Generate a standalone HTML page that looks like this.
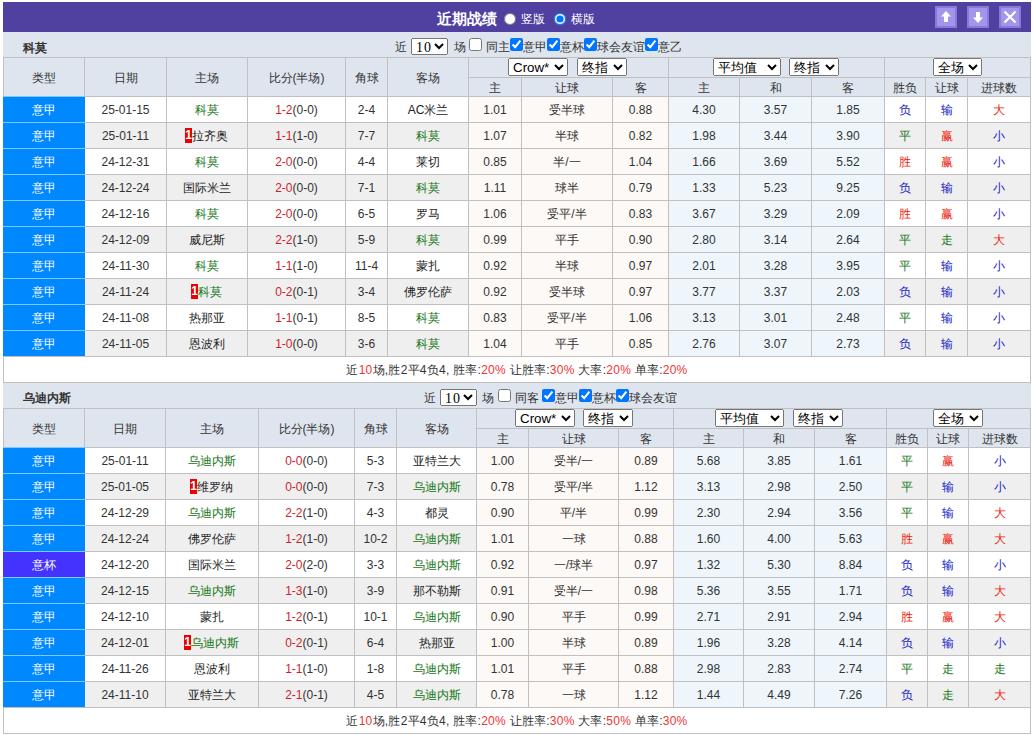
<!DOCTYPE html><html><head><meta charset="utf-8"><style>
*{margin:0;padding:0;box-sizing:border-box}
html,body{width:1033px;height:735px;overflow:hidden;background:#fff}
body{position:relative;font-family:"Liberation Sans",sans-serif;font-size:12px;color:#333}
.a{position:absolute}
.c{position:absolute;text-align:center;white-space:nowrap;overflow:hidden}
.t{position:absolute;white-space:nowrap;line-height:16px;color:#333}
.team{position:absolute;font-weight:bold;color:#333;white-space:nowrap}
.title{position:absolute;font-weight:bold;color:#fff;font-size:15px;white-space:nowrap}
.radio{position:absolute;width:12px;height:12px;margin:0}
.btn{position:absolute;width:22px;height:22px;background:#a494ec;border:2px solid #8a7ad8}
.sel{position:absolute;font-family:"Liberation Sans",sans-serif;font-size:13.33px;margin:0}
.s10{font-family:"Liberation Serif",serif;font-size:14px;letter-spacing:1px}
.cb{position:absolute;width:13px;height:13px;margin:0}
.rc{display:inline-block;background:#e00;color:#fff;font-weight:bold;width:7px;height:15px;line-height:15px;font-size:12px;vertical-align:middle;text-align:center;overflow:hidden;margin-top:-3px;margin-left:-1px}
.r{color:#e33}
</style></head><body><div class="a" style="left:3px;top:2px;width:1028px;height:30px;background:#5040a0;"></div><div class="a" style="left:3px;top:32px;width:1028px;height:1px;background:#dcdcf6;"></div><div class="title" style="left:437px;top:4px;height:30px;line-height:30px">近期战绩</div><input type="radio" name="v" class="radio" style="left:504px;top:13px"><div class="t" style="left:521px;top:11px;color:#fff">竖版</div><input type="radio" name="v" class="radio" checked style="left:554px;top:13px"><div class="t" style="left:571px;top:11px;color:#fff">横版</div><div class="btn" style="left:935px;top:6px"></div><div class="btn" style="left:967px;top:6px"></div><div class="btn" style="left:999px;top:6px"></div><svg class="a" style="left:935px;top:6px" width="22" height="22" viewBox="0 0 22 22"><path d="M11 5 L16 10.5 L13 10.5 L13 16 L9 16 L9 10.5 L6 10.5 Z" fill="#fff"/></svg><svg class="a" style="left:967px;top:6px" width="22" height="22" viewBox="0 0 22 22"><path d="M11 17 L16 11.5 L13 11.5 L13 6 L9 6 L9 11.5 L6 11.5 Z" fill="#fff"/></svg><svg class="a" style="left:999px;top:6px" width="22" height="22" viewBox="0 0 22 22"><path d="M5.5 5.5 L16.5 16.5 M16.5 5.5 L5.5 16.5" stroke="#fff" stroke-width="2.2"/></svg><div class="a" style="left:3px;top:32px;width:1028px;height:25px;background:#dfe5ee;"></div><div class="team" style="left:23px;top:36px;height:25px;line-height:25px">科莫</div><div class="t" style="left:395px;top:39px;">近</div><select class="sel s10" style="left:411px;top:38px;width:37px;height:17px;"><option>10</option></select><div class="t" style="left:454px;top:39px;">场</div><input type="checkbox" class="cb" style="left:469px;top:38px"><div class="t" style="left:486px;top:39px;">同主</div><input type="checkbox" class="cb" style="left:510px;top:38px" checked><div class="t" style="left:523px;top:39px;">意甲</div><input type="checkbox" class="cb" style="left:547px;top:38px" checked><div class="t" style="left:560px;top:39px;">意杯</div><input type="checkbox" class="cb" style="left:584px;top:38px" checked><div class="t" style="left:597px;top:39px;">球会友谊</div><input type="checkbox" class="cb" style="left:645px;top:38px" checked><div class="t" style="left:658px;top:39px;">意乙</div><div class="a" style="left:3px;top:57px;width:1028px;height:326px;background:#c0c0c0;"></div><div class="c" style="left:4px;top:58px;width:80px;height:38px;line-height:40px;background:#dfe5ee;color:#333;">类型</div><div class="c" style="left:85px;top:58px;width:81px;height:38px;line-height:40px;background:#dfe5ee;color:#333;">日期</div><div class="c" style="left:167px;top:58px;width:80px;height:38px;line-height:40px;background:#dfe5ee;color:#333;">主场</div><div class="c" style="left:248px;top:58px;width:97px;height:38px;line-height:40px;background:#dfe5ee;color:#333;">比分(半场)</div><div class="c" style="left:346px;top:58px;width:41px;height:38px;line-height:40px;background:#dfe5ee;color:#333;">角球</div><div class="c" style="left:388px;top:58px;width:80px;height:38px;line-height:40px;background:#dfe5ee;color:#333;">客场</div><div class="c" style="left:469px;top:58px;width:199px;height:19px;line-height:21px;background:#dfe5ee;"></div><div class="c" style="left:669px;top:58px;width:215px;height:19px;line-height:21px;background:#dfe5ee;"></div><div class="c" style="left:885px;top:58px;width:145px;height:19px;line-height:21px;background:#dfe5ee;"></div><div class="c" style="left:469px;top:78px;width:52px;height:18px;line-height:20px;background:#dfe5ee;color:#333;">主</div><div class="c" style="left:522px;top:78px;width:90px;height:18px;line-height:20px;background:#dfe5ee;color:#333;">让球</div><div class="c" style="left:613px;top:78px;width:55px;height:18px;line-height:20px;background:#dfe5ee;color:#333;">客</div><div class="c" style="left:669px;top:78px;width:70px;height:18px;line-height:20px;background:#dfe5ee;color:#333;">主</div><div class="c" style="left:740px;top:78px;width:71px;height:18px;line-height:20px;background:#dfe5ee;color:#333;">和</div><div class="c" style="left:812px;top:78px;width:72px;height:18px;line-height:20px;background:#dfe5ee;color:#333;">客</div><div class="c" style="left:885px;top:78px;width:40px;height:18px;line-height:20px;background:#dfe5ee;color:#333;">胜负</div><div class="c" style="left:926px;top:78px;width:41px;height:18px;line-height:20px;background:#dfe5ee;color:#333;">让球</div><div class="c" style="left:968px;top:78px;width:62px;height:18px;line-height:20px;background:#dfe5ee;color:#333;">进球数</div><div class="a" style="left:3px;top:96px;width:82px;height:27px;background:#0088ff;"></div><div class="a" style="left:3px;top:96px;width:82px;height:1px;background:#7ccaff;"></div><div class="a" style="left:3px;top:122px;width:82px;height:1px;background:#7ccaff;"></div><div class="c" style="left:3px;top:97px;width:82px;height:25px;line-height:27px;color:#fff">意甲</div><div class="c" style="left:85px;top:97px;width:81px;height:25px;line-height:27px;background:#fff;color:#333;">25-01-15</div><div class="c" style="left:167px;top:97px;width:80px;height:25px;line-height:27px;background:#fff;color:#157515;">科莫</div><div class="c" style="left:248px;top:97px;width:97px;height:25px;line-height:27px;background:#fff;color:#333;"><span style="color:#cc1f2e">1-2</span>(0-0)</div><div class="c" style="left:346px;top:97px;width:41px;height:25px;line-height:27px;background:#fff;color:#333;">2-4</div><div class="c" style="left:388px;top:97px;width:80px;height:25px;line-height:27px;background:#fff;color:#222;">AC米兰</div><div class="c" style="left:469px;top:97px;width:52px;height:25px;line-height:27px;background:#fdf9f6;color:#333;">1.01</div><div class="c" style="left:522px;top:97px;width:90px;height:25px;line-height:27px;background:#fdf9f6;color:#333;">受半球</div><div class="c" style="left:613px;top:97px;width:55px;height:25px;line-height:27px;background:#fdf9f6;color:#333;">0.88</div><div class="c" style="left:669px;top:97px;width:70px;height:25px;line-height:27px;background:#eef6fb;color:#333;">4.30</div><div class="c" style="left:740px;top:97px;width:71px;height:25px;line-height:27px;background:#eef6fb;color:#333;">3.57</div><div class="c" style="left:812px;top:97px;width:72px;height:25px;line-height:27px;background:#eef6fb;color:#333;">1.85</div><div class="c" style="left:885px;top:97px;width:40px;height:25px;line-height:27px;background:#fff;color:#2020c8;">负</div><div class="c" style="left:926px;top:97px;width:41px;height:25px;line-height:27px;background:#fff;color:#2020c8;">输</div><div class="c" style="left:968px;top:97px;width:62px;height:25px;line-height:27px;background:#fff;color:#ee1a0a;">大</div><div class="a" style="left:3px;top:122px;width:82px;height:27px;background:#0088ff;"></div><div class="a" style="left:3px;top:122px;width:82px;height:1px;background:#7ccaff;"></div><div class="a" style="left:3px;top:148px;width:82px;height:1px;background:#7ccaff;"></div><div class="c" style="left:3px;top:123px;width:82px;height:25px;line-height:27px;color:#fff">意甲</div><div class="c" style="left:85px;top:123px;width:81px;height:25px;line-height:27px;background:#efefef;color:#333;">25-01-11</div><div class="c" style="left:167px;top:123px;width:80px;height:25px;line-height:27px;background:#efefef;color:#222;"><span class="rc">1</span>拉齐奥</div><div class="c" style="left:248px;top:123px;width:97px;height:25px;line-height:27px;background:#efefef;color:#333;"><span style="color:#cc1f2e">1-1</span>(1-0)</div><div class="c" style="left:346px;top:123px;width:41px;height:25px;line-height:27px;background:#efefef;color:#333;">7-7</div><div class="c" style="left:388px;top:123px;width:80px;height:25px;line-height:27px;background:#efefef;color:#157515;">科莫</div><div class="c" style="left:469px;top:123px;width:52px;height:25px;line-height:27px;background:#fdf9f6;color:#333;">1.07</div><div class="c" style="left:522px;top:123px;width:90px;height:25px;line-height:27px;background:#fdf9f6;color:#333;">半球</div><div class="c" style="left:613px;top:123px;width:55px;height:25px;line-height:27px;background:#fdf9f6;color:#333;">0.82</div><div class="c" style="left:669px;top:123px;width:70px;height:25px;line-height:27px;background:#eef6fb;color:#333;">1.98</div><div class="c" style="left:740px;top:123px;width:71px;height:25px;line-height:27px;background:#eef6fb;color:#333;">3.44</div><div class="c" style="left:812px;top:123px;width:72px;height:25px;line-height:27px;background:#eef6fb;color:#333;">3.90</div><div class="c" style="left:885px;top:123px;width:40px;height:25px;line-height:27px;background:#efefef;color:#157515;">平</div><div class="c" style="left:926px;top:123px;width:41px;height:25px;line-height:27px;background:#efefef;color:#ee1a0a;">赢</div><div class="c" style="left:968px;top:123px;width:62px;height:25px;line-height:27px;background:#efefef;color:#2020c8;">小</div><div class="a" style="left:3px;top:148px;width:82px;height:27px;background:#0088ff;"></div><div class="a" style="left:3px;top:148px;width:82px;height:1px;background:#7ccaff;"></div><div class="a" style="left:3px;top:174px;width:82px;height:1px;background:#7ccaff;"></div><div class="c" style="left:3px;top:149px;width:82px;height:25px;line-height:27px;color:#fff">意甲</div><div class="c" style="left:85px;top:149px;width:81px;height:25px;line-height:27px;background:#fff;color:#333;">24-12-31</div><div class="c" style="left:167px;top:149px;width:80px;height:25px;line-height:27px;background:#fff;color:#157515;">科莫</div><div class="c" style="left:248px;top:149px;width:97px;height:25px;line-height:27px;background:#fff;color:#333;"><span style="color:#cc1f2e">2-0</span>(0-0)</div><div class="c" style="left:346px;top:149px;width:41px;height:25px;line-height:27px;background:#fff;color:#333;">4-4</div><div class="c" style="left:388px;top:149px;width:80px;height:25px;line-height:27px;background:#fff;color:#222;">莱切</div><div class="c" style="left:469px;top:149px;width:52px;height:25px;line-height:27px;background:#fdf9f6;color:#333;">0.85</div><div class="c" style="left:522px;top:149px;width:90px;height:25px;line-height:27px;background:#fdf9f6;color:#333;">半/一</div><div class="c" style="left:613px;top:149px;width:55px;height:25px;line-height:27px;background:#fdf9f6;color:#333;">1.04</div><div class="c" style="left:669px;top:149px;width:70px;height:25px;line-height:27px;background:#eef6fb;color:#333;">1.66</div><div class="c" style="left:740px;top:149px;width:71px;height:25px;line-height:27px;background:#eef6fb;color:#333;">3.69</div><div class="c" style="left:812px;top:149px;width:72px;height:25px;line-height:27px;background:#eef6fb;color:#333;">5.52</div><div class="c" style="left:885px;top:149px;width:40px;height:25px;line-height:27px;background:#fff;color:#ee1a0a;">胜</div><div class="c" style="left:926px;top:149px;width:41px;height:25px;line-height:27px;background:#fff;color:#ee1a0a;">赢</div><div class="c" style="left:968px;top:149px;width:62px;height:25px;line-height:27px;background:#fff;color:#2020c8;">小</div><div class="a" style="left:3px;top:174px;width:82px;height:27px;background:#0088ff;"></div><div class="a" style="left:3px;top:174px;width:82px;height:1px;background:#7ccaff;"></div><div class="a" style="left:3px;top:200px;width:82px;height:1px;background:#7ccaff;"></div><div class="c" style="left:3px;top:175px;width:82px;height:25px;line-height:27px;color:#fff">意甲</div><div class="c" style="left:85px;top:175px;width:81px;height:25px;line-height:27px;background:#efefef;color:#333;">24-12-24</div><div class="c" style="left:167px;top:175px;width:80px;height:25px;line-height:27px;background:#efefef;color:#222;">国际米兰</div><div class="c" style="left:248px;top:175px;width:97px;height:25px;line-height:27px;background:#efefef;color:#333;"><span style="color:#cc1f2e">2-0</span>(0-0)</div><div class="c" style="left:346px;top:175px;width:41px;height:25px;line-height:27px;background:#efefef;color:#333;">7-1</div><div class="c" style="left:388px;top:175px;width:80px;height:25px;line-height:27px;background:#efefef;color:#157515;">科莫</div><div class="c" style="left:469px;top:175px;width:52px;height:25px;line-height:27px;background:#fdf9f6;color:#333;">1.11</div><div class="c" style="left:522px;top:175px;width:90px;height:25px;line-height:27px;background:#fdf9f6;color:#333;">球半</div><div class="c" style="left:613px;top:175px;width:55px;height:25px;line-height:27px;background:#fdf9f6;color:#333;">0.79</div><div class="c" style="left:669px;top:175px;width:70px;height:25px;line-height:27px;background:#eef6fb;color:#333;">1.33</div><div class="c" style="left:740px;top:175px;width:71px;height:25px;line-height:27px;background:#eef6fb;color:#333;">5.23</div><div class="c" style="left:812px;top:175px;width:72px;height:25px;line-height:27px;background:#eef6fb;color:#333;">9.25</div><div class="c" style="left:885px;top:175px;width:40px;height:25px;line-height:27px;background:#efefef;color:#2020c8;">负</div><div class="c" style="left:926px;top:175px;width:41px;height:25px;line-height:27px;background:#efefef;color:#2020c8;">输</div><div class="c" style="left:968px;top:175px;width:62px;height:25px;line-height:27px;background:#efefef;color:#2020c8;">小</div><div class="a" style="left:3px;top:200px;width:82px;height:27px;background:#0088ff;"></div><div class="a" style="left:3px;top:200px;width:82px;height:1px;background:#7ccaff;"></div><div class="a" style="left:3px;top:226px;width:82px;height:1px;background:#7ccaff;"></div><div class="c" style="left:3px;top:201px;width:82px;height:25px;line-height:27px;color:#fff">意甲</div><div class="c" style="left:85px;top:201px;width:81px;height:25px;line-height:27px;background:#fff;color:#333;">24-12-16</div><div class="c" style="left:167px;top:201px;width:80px;height:25px;line-height:27px;background:#fff;color:#157515;">科莫</div><div class="c" style="left:248px;top:201px;width:97px;height:25px;line-height:27px;background:#fff;color:#333;"><span style="color:#cc1f2e">2-0</span>(0-0)</div><div class="c" style="left:346px;top:201px;width:41px;height:25px;line-height:27px;background:#fff;color:#333;">6-5</div><div class="c" style="left:388px;top:201px;width:80px;height:25px;line-height:27px;background:#fff;color:#222;">罗马</div><div class="c" style="left:469px;top:201px;width:52px;height:25px;line-height:27px;background:#fdf9f6;color:#333;">1.06</div><div class="c" style="left:522px;top:201px;width:90px;height:25px;line-height:27px;background:#fdf9f6;color:#333;">受平/半</div><div class="c" style="left:613px;top:201px;width:55px;height:25px;line-height:27px;background:#fdf9f6;color:#333;">0.83</div><div class="c" style="left:669px;top:201px;width:70px;height:25px;line-height:27px;background:#eef6fb;color:#333;">3.67</div><div class="c" style="left:740px;top:201px;width:71px;height:25px;line-height:27px;background:#eef6fb;color:#333;">3.29</div><div class="c" style="left:812px;top:201px;width:72px;height:25px;line-height:27px;background:#eef6fb;color:#333;">2.09</div><div class="c" style="left:885px;top:201px;width:40px;height:25px;line-height:27px;background:#fff;color:#ee1a0a;">胜</div><div class="c" style="left:926px;top:201px;width:41px;height:25px;line-height:27px;background:#fff;color:#ee1a0a;">赢</div><div class="c" style="left:968px;top:201px;width:62px;height:25px;line-height:27px;background:#fff;color:#2020c8;">小</div><div class="a" style="left:3px;top:226px;width:82px;height:27px;background:#0088ff;"></div><div class="a" style="left:3px;top:226px;width:82px;height:1px;background:#7ccaff;"></div><div class="a" style="left:3px;top:252px;width:82px;height:1px;background:#7ccaff;"></div><div class="c" style="left:3px;top:227px;width:82px;height:25px;line-height:27px;color:#fff">意甲</div><div class="c" style="left:85px;top:227px;width:81px;height:25px;line-height:27px;background:#efefef;color:#333;">24-12-09</div><div class="c" style="left:167px;top:227px;width:80px;height:25px;line-height:27px;background:#efefef;color:#222;">威尼斯</div><div class="c" style="left:248px;top:227px;width:97px;height:25px;line-height:27px;background:#efefef;color:#333;"><span style="color:#cc1f2e">2-2</span>(1-0)</div><div class="c" style="left:346px;top:227px;width:41px;height:25px;line-height:27px;background:#efefef;color:#333;">5-9</div><div class="c" style="left:388px;top:227px;width:80px;height:25px;line-height:27px;background:#efefef;color:#157515;">科莫</div><div class="c" style="left:469px;top:227px;width:52px;height:25px;line-height:27px;background:#fdf9f6;color:#333;">0.99</div><div class="c" style="left:522px;top:227px;width:90px;height:25px;line-height:27px;background:#fdf9f6;color:#333;">平手</div><div class="c" style="left:613px;top:227px;width:55px;height:25px;line-height:27px;background:#fdf9f6;color:#333;">0.90</div><div class="c" style="left:669px;top:227px;width:70px;height:25px;line-height:27px;background:#eef6fb;color:#333;">2.80</div><div class="c" style="left:740px;top:227px;width:71px;height:25px;line-height:27px;background:#eef6fb;color:#333;">3.14</div><div class="c" style="left:812px;top:227px;width:72px;height:25px;line-height:27px;background:#eef6fb;color:#333;">2.64</div><div class="c" style="left:885px;top:227px;width:40px;height:25px;line-height:27px;background:#efefef;color:#157515;">平</div><div class="c" style="left:926px;top:227px;width:41px;height:25px;line-height:27px;background:#efefef;color:#157515;">走</div><div class="c" style="left:968px;top:227px;width:62px;height:25px;line-height:27px;background:#efefef;color:#ee1a0a;">大</div><div class="a" style="left:3px;top:252px;width:82px;height:27px;background:#0088ff;"></div><div class="a" style="left:3px;top:252px;width:82px;height:1px;background:#7ccaff;"></div><div class="a" style="left:3px;top:278px;width:82px;height:1px;background:#7ccaff;"></div><div class="c" style="left:3px;top:253px;width:82px;height:25px;line-height:27px;color:#fff">意甲</div><div class="c" style="left:85px;top:253px;width:81px;height:25px;line-height:27px;background:#fff;color:#333;">24-11-30</div><div class="c" style="left:167px;top:253px;width:80px;height:25px;line-height:27px;background:#fff;color:#157515;">科莫</div><div class="c" style="left:248px;top:253px;width:97px;height:25px;line-height:27px;background:#fff;color:#333;"><span style="color:#cc1f2e">1-1</span>(1-0)</div><div class="c" style="left:346px;top:253px;width:41px;height:25px;line-height:27px;background:#fff;color:#333;">11-4</div><div class="c" style="left:388px;top:253px;width:80px;height:25px;line-height:27px;background:#fff;color:#222;">蒙扎</div><div class="c" style="left:469px;top:253px;width:52px;height:25px;line-height:27px;background:#fdf9f6;color:#333;">0.92</div><div class="c" style="left:522px;top:253px;width:90px;height:25px;line-height:27px;background:#fdf9f6;color:#333;">半球</div><div class="c" style="left:613px;top:253px;width:55px;height:25px;line-height:27px;background:#fdf9f6;color:#333;">0.97</div><div class="c" style="left:669px;top:253px;width:70px;height:25px;line-height:27px;background:#eef6fb;color:#333;">2.01</div><div class="c" style="left:740px;top:253px;width:71px;height:25px;line-height:27px;background:#eef6fb;color:#333;">3.28</div><div class="c" style="left:812px;top:253px;width:72px;height:25px;line-height:27px;background:#eef6fb;color:#333;">3.95</div><div class="c" style="left:885px;top:253px;width:40px;height:25px;line-height:27px;background:#fff;color:#157515;">平</div><div class="c" style="left:926px;top:253px;width:41px;height:25px;line-height:27px;background:#fff;color:#2020c8;">输</div><div class="c" style="left:968px;top:253px;width:62px;height:25px;line-height:27px;background:#fff;color:#2020c8;">小</div><div class="a" style="left:3px;top:278px;width:82px;height:27px;background:#0088ff;"></div><div class="a" style="left:3px;top:278px;width:82px;height:1px;background:#7ccaff;"></div><div class="a" style="left:3px;top:304px;width:82px;height:1px;background:#7ccaff;"></div><div class="c" style="left:3px;top:279px;width:82px;height:25px;line-height:27px;color:#fff">意甲</div><div class="c" style="left:85px;top:279px;width:81px;height:25px;line-height:27px;background:#efefef;color:#333;">24-11-24</div><div class="c" style="left:167px;top:279px;width:80px;height:25px;line-height:27px;background:#efefef;color:#157515;"><span class="rc">1</span>科莫</div><div class="c" style="left:248px;top:279px;width:97px;height:25px;line-height:27px;background:#efefef;color:#333;"><span style="color:#cc1f2e">0-2</span>(0-1)</div><div class="c" style="left:346px;top:279px;width:41px;height:25px;line-height:27px;background:#efefef;color:#333;">3-4</div><div class="c" style="left:388px;top:279px;width:80px;height:25px;line-height:27px;background:#efefef;color:#222;">佛罗伦萨</div><div class="c" style="left:469px;top:279px;width:52px;height:25px;line-height:27px;background:#fdf9f6;color:#333;">0.92</div><div class="c" style="left:522px;top:279px;width:90px;height:25px;line-height:27px;background:#fdf9f6;color:#333;">受半球</div><div class="c" style="left:613px;top:279px;width:55px;height:25px;line-height:27px;background:#fdf9f6;color:#333;">0.97</div><div class="c" style="left:669px;top:279px;width:70px;height:25px;line-height:27px;background:#eef6fb;color:#333;">3.77</div><div class="c" style="left:740px;top:279px;width:71px;height:25px;line-height:27px;background:#eef6fb;color:#333;">3.37</div><div class="c" style="left:812px;top:279px;width:72px;height:25px;line-height:27px;background:#eef6fb;color:#333;">2.03</div><div class="c" style="left:885px;top:279px;width:40px;height:25px;line-height:27px;background:#efefef;color:#2020c8;">负</div><div class="c" style="left:926px;top:279px;width:41px;height:25px;line-height:27px;background:#efefef;color:#2020c8;">输</div><div class="c" style="left:968px;top:279px;width:62px;height:25px;line-height:27px;background:#efefef;color:#2020c8;">小</div><div class="a" style="left:3px;top:304px;width:82px;height:27px;background:#0088ff;"></div><div class="a" style="left:3px;top:304px;width:82px;height:1px;background:#7ccaff;"></div><div class="a" style="left:3px;top:330px;width:82px;height:1px;background:#7ccaff;"></div><div class="c" style="left:3px;top:305px;width:82px;height:25px;line-height:27px;color:#fff">意甲</div><div class="c" style="left:85px;top:305px;width:81px;height:25px;line-height:27px;background:#fff;color:#333;">24-11-08</div><div class="c" style="left:167px;top:305px;width:80px;height:25px;line-height:27px;background:#fff;color:#222;">热那亚</div><div class="c" style="left:248px;top:305px;width:97px;height:25px;line-height:27px;background:#fff;color:#333;"><span style="color:#cc1f2e">1-1</span>(0-1)</div><div class="c" style="left:346px;top:305px;width:41px;height:25px;line-height:27px;background:#fff;color:#333;">8-5</div><div class="c" style="left:388px;top:305px;width:80px;height:25px;line-height:27px;background:#fff;color:#157515;">科莫</div><div class="c" style="left:469px;top:305px;width:52px;height:25px;line-height:27px;background:#fdf9f6;color:#333;">0.83</div><div class="c" style="left:522px;top:305px;width:90px;height:25px;line-height:27px;background:#fdf9f6;color:#333;">受平/半</div><div class="c" style="left:613px;top:305px;width:55px;height:25px;line-height:27px;background:#fdf9f6;color:#333;">1.06</div><div class="c" style="left:669px;top:305px;width:70px;height:25px;line-height:27px;background:#eef6fb;color:#333;">3.13</div><div class="c" style="left:740px;top:305px;width:71px;height:25px;line-height:27px;background:#eef6fb;color:#333;">3.01</div><div class="c" style="left:812px;top:305px;width:72px;height:25px;line-height:27px;background:#eef6fb;color:#333;">2.48</div><div class="c" style="left:885px;top:305px;width:40px;height:25px;line-height:27px;background:#fff;color:#157515;">平</div><div class="c" style="left:926px;top:305px;width:41px;height:25px;line-height:27px;background:#fff;color:#2020c8;">输</div><div class="c" style="left:968px;top:305px;width:62px;height:25px;line-height:27px;background:#fff;color:#2020c8;">小</div><div class="a" style="left:3px;top:330px;width:82px;height:27px;background:#0088ff;"></div><div class="a" style="left:3px;top:330px;width:82px;height:1px;background:#7ccaff;"></div><div class="a" style="left:3px;top:356px;width:82px;height:1px;background:#c0c0c0;"></div><div class="c" style="left:3px;top:331px;width:82px;height:25px;line-height:27px;color:#fff">意甲</div><div class="c" style="left:85px;top:331px;width:81px;height:25px;line-height:27px;background:#efefef;color:#333;">24-11-05</div><div class="c" style="left:167px;top:331px;width:80px;height:25px;line-height:27px;background:#efefef;color:#222;">恩波利</div><div class="c" style="left:248px;top:331px;width:97px;height:25px;line-height:27px;background:#efefef;color:#333;"><span style="color:#cc1f2e">1-0</span>(0-0)</div><div class="c" style="left:346px;top:331px;width:41px;height:25px;line-height:27px;background:#efefef;color:#333;">3-6</div><div class="c" style="left:388px;top:331px;width:80px;height:25px;line-height:27px;background:#efefef;color:#157515;">科莫</div><div class="c" style="left:469px;top:331px;width:52px;height:25px;line-height:27px;background:#fdf9f6;color:#333;">1.04</div><div class="c" style="left:522px;top:331px;width:90px;height:25px;line-height:27px;background:#fdf9f6;color:#333;">平手</div><div class="c" style="left:613px;top:331px;width:55px;height:25px;line-height:27px;background:#fdf9f6;color:#333;">0.85</div><div class="c" style="left:669px;top:331px;width:70px;height:25px;line-height:27px;background:#eef6fb;color:#333;">2.76</div><div class="c" style="left:740px;top:331px;width:71px;height:25px;line-height:27px;background:#eef6fb;color:#333;">3.07</div><div class="c" style="left:812px;top:331px;width:72px;height:25px;line-height:27px;background:#eef6fb;color:#333;">2.73</div><div class="c" style="left:885px;top:331px;width:40px;height:25px;line-height:27px;background:#efefef;color:#2020c8;">负</div><div class="c" style="left:926px;top:331px;width:41px;height:25px;line-height:27px;background:#efefef;color:#2020c8;">输</div><div class="c" style="left:968px;top:331px;width:62px;height:25px;line-height:27px;background:#efefef;color:#2020c8;">小</div><div class="c" style="left:4px;top:357px;width:1026px;height:25px;line-height:27px;background:#fff;color:#333;;letter-spacing:0.25px">近<span class="r">10</span>场,胜2平4负4, 胜率:<span class="r">20%</span> 让胜率:<span class="r">30%</span> 大率:<span class="r">20%</span> 单率:<span class="r">20%</span></div><select class="sel" style="left:508px;top:58px;width:60px;height:18px;"><option>Crow*</option></select><select class="sel" style="left:577px;top:58px;width:50px;height:18px;"><option>终指</option></select><select class="sel" style="left:713px;top:58px;width:68px;height:18px;"><option>平均值</option></select><select class="sel" style="left:789px;top:58px;width:50px;height:18px;"><option>终指</option></select><select class="sel" style="left:933px;top:58px;width:49px;height:18px;"><option>全场</option></select><div class="a" style="left:3px;top:383px;width:1028px;height:25px;background:#dfe5ee;"></div><div class="team" style="left:23px;top:385px;height:26px;line-height:26px">乌迪内斯</div><div class="t" style="left:424px;top:390px;">近</div><select class="sel s10" style="left:440px;top:389px;width:37px;height:17px;"><option>10</option></select><div class="t" style="left:482px;top:390px;">场</div><input type="checkbox" class="cb" style="left:498px;top:389px"><div class="t" style="left:515px;top:390px;">同客</div><input type="checkbox" class="cb" style="left:542px;top:389px" checked><div class="t" style="left:555px;top:390px;">意甲</div><input type="checkbox" class="cb" style="left:579px;top:389px" checked><div class="t" style="left:592px;top:390px;">意杯</div><input type="checkbox" class="cb" style="left:616px;top:389px" checked><div class="t" style="left:629px;top:390px;">球会友谊</div><div class="a" style="left:3px;top:408px;width:1028px;height:326px;background:#c0c0c0;"></div><div class="c" style="left:4px;top:409px;width:80px;height:38px;line-height:40px;background:#dfe5ee;color:#333;">类型</div><div class="c" style="left:85px;top:409px;width:80px;height:38px;line-height:40px;background:#dfe5ee;color:#333;">日期</div><div class="c" style="left:166px;top:409px;width:92px;height:38px;line-height:40px;background:#dfe5ee;color:#333;">主场</div><div class="c" style="left:259px;top:409px;width:95px;height:38px;line-height:40px;background:#dfe5ee;color:#333;">比分(半场)</div><div class="c" style="left:355px;top:409px;width:41px;height:38px;line-height:40px;background:#dfe5ee;color:#333;">角球</div><div class="c" style="left:397px;top:409px;width:79px;height:38px;line-height:40px;background:#dfe5ee;color:#333;">客场</div><div class="c" style="left:477px;top:409px;width:196px;height:19px;line-height:21px;background:#dfe5ee;"></div><div class="c" style="left:674px;top:409px;width:212px;height:19px;line-height:21px;background:#dfe5ee;"></div><div class="c" style="left:887px;top:409px;width:143px;height:19px;line-height:21px;background:#dfe5ee;"></div><div class="c" style="left:477px;top:429px;width:51px;height:18px;line-height:20px;background:#dfe5ee;color:#333;">主</div><div class="c" style="left:529px;top:429px;width:89px;height:18px;line-height:20px;background:#dfe5ee;color:#333;">让球</div><div class="c" style="left:619px;top:429px;width:54px;height:18px;line-height:20px;background:#dfe5ee;color:#333;">客</div><div class="c" style="left:674px;top:429px;width:69px;height:18px;line-height:20px;background:#dfe5ee;color:#333;">主</div><div class="c" style="left:744px;top:429px;width:70px;height:18px;line-height:20px;background:#dfe5ee;color:#333;">和</div><div class="c" style="left:815px;top:429px;width:71px;height:18px;line-height:20px;background:#dfe5ee;color:#333;">客</div><div class="c" style="left:887px;top:429px;width:40px;height:18px;line-height:20px;background:#dfe5ee;color:#333;">胜负</div><div class="c" style="left:928px;top:429px;width:40px;height:18px;line-height:20px;background:#dfe5ee;color:#333;">让球</div><div class="c" style="left:969px;top:429px;width:61px;height:18px;line-height:20px;background:#dfe5ee;color:#333;">进球数</div><div class="a" style="left:3px;top:447px;width:82px;height:27px;background:#0088ff;"></div><div class="a" style="left:3px;top:447px;width:82px;height:1px;background:#7ccaff;"></div><div class="a" style="left:3px;top:473px;width:82px;height:1px;background:#7ccaff;"></div><div class="c" style="left:3px;top:448px;width:82px;height:25px;line-height:27px;color:#fff">意甲</div><div class="c" style="left:85px;top:448px;width:80px;height:25px;line-height:27px;background:#fff;color:#333;">25-01-11</div><div class="c" style="left:166px;top:448px;width:92px;height:25px;line-height:27px;background:#fff;color:#157515;">乌迪内斯</div><div class="c" style="left:259px;top:448px;width:95px;height:25px;line-height:27px;background:#fff;color:#333;"><span style="color:#cc1f2e">0-0</span>(0-0)</div><div class="c" style="left:355px;top:448px;width:41px;height:25px;line-height:27px;background:#fff;color:#333;">5-3</div><div class="c" style="left:397px;top:448px;width:79px;height:25px;line-height:27px;background:#fff;color:#222;">亚特兰大</div><div class="c" style="left:477px;top:448px;width:51px;height:25px;line-height:27px;background:#fdf9f6;color:#333;">1.00</div><div class="c" style="left:529px;top:448px;width:89px;height:25px;line-height:27px;background:#fdf9f6;color:#333;">受半/一</div><div class="c" style="left:619px;top:448px;width:54px;height:25px;line-height:27px;background:#fdf9f6;color:#333;">0.89</div><div class="c" style="left:674px;top:448px;width:69px;height:25px;line-height:27px;background:#eef6fb;color:#333;">5.68</div><div class="c" style="left:744px;top:448px;width:70px;height:25px;line-height:27px;background:#eef6fb;color:#333;">3.85</div><div class="c" style="left:815px;top:448px;width:71px;height:25px;line-height:27px;background:#eef6fb;color:#333;">1.61</div><div class="c" style="left:887px;top:448px;width:40px;height:25px;line-height:27px;background:#fff;color:#157515;">平</div><div class="c" style="left:928px;top:448px;width:40px;height:25px;line-height:27px;background:#fff;color:#ee1a0a;">赢</div><div class="c" style="left:969px;top:448px;width:61px;height:25px;line-height:27px;background:#fff;color:#2020c8;">小</div><div class="a" style="left:3px;top:473px;width:82px;height:27px;background:#0088ff;"></div><div class="a" style="left:3px;top:473px;width:82px;height:1px;background:#7ccaff;"></div><div class="a" style="left:3px;top:499px;width:82px;height:1px;background:#7ccaff;"></div><div class="c" style="left:3px;top:474px;width:82px;height:25px;line-height:27px;color:#fff">意甲</div><div class="c" style="left:85px;top:474px;width:80px;height:25px;line-height:27px;background:#efefef;color:#333;">25-01-05</div><div class="c" style="left:166px;top:474px;width:92px;height:25px;line-height:27px;background:#efefef;color:#222;"><span class="rc">1</span>维罗纳</div><div class="c" style="left:259px;top:474px;width:95px;height:25px;line-height:27px;background:#efefef;color:#333;"><span style="color:#cc1f2e">0-0</span>(0-0)</div><div class="c" style="left:355px;top:474px;width:41px;height:25px;line-height:27px;background:#efefef;color:#333;">7-3</div><div class="c" style="left:397px;top:474px;width:79px;height:25px;line-height:27px;background:#efefef;color:#157515;">乌迪内斯</div><div class="c" style="left:477px;top:474px;width:51px;height:25px;line-height:27px;background:#fdf9f6;color:#333;">0.78</div><div class="c" style="left:529px;top:474px;width:89px;height:25px;line-height:27px;background:#fdf9f6;color:#333;">受平/半</div><div class="c" style="left:619px;top:474px;width:54px;height:25px;line-height:27px;background:#fdf9f6;color:#333;">1.12</div><div class="c" style="left:674px;top:474px;width:69px;height:25px;line-height:27px;background:#eef6fb;color:#333;">3.13</div><div class="c" style="left:744px;top:474px;width:70px;height:25px;line-height:27px;background:#eef6fb;color:#333;">2.98</div><div class="c" style="left:815px;top:474px;width:71px;height:25px;line-height:27px;background:#eef6fb;color:#333;">2.50</div><div class="c" style="left:887px;top:474px;width:40px;height:25px;line-height:27px;background:#efefef;color:#157515;">平</div><div class="c" style="left:928px;top:474px;width:40px;height:25px;line-height:27px;background:#efefef;color:#2020c8;">输</div><div class="c" style="left:969px;top:474px;width:61px;height:25px;line-height:27px;background:#efefef;color:#2020c8;">小</div><div class="a" style="left:3px;top:499px;width:82px;height:27px;background:#0088ff;"></div><div class="a" style="left:3px;top:499px;width:82px;height:1px;background:#7ccaff;"></div><div class="a" style="left:3px;top:525px;width:82px;height:1px;background:#7ccaff;"></div><div class="c" style="left:3px;top:500px;width:82px;height:25px;line-height:27px;color:#fff">意甲</div><div class="c" style="left:85px;top:500px;width:80px;height:25px;line-height:27px;background:#fff;color:#333;">24-12-29</div><div class="c" style="left:166px;top:500px;width:92px;height:25px;line-height:27px;background:#fff;color:#157515;">乌迪内斯</div><div class="c" style="left:259px;top:500px;width:95px;height:25px;line-height:27px;background:#fff;color:#333;"><span style="color:#cc1f2e">2-2</span>(1-0)</div><div class="c" style="left:355px;top:500px;width:41px;height:25px;line-height:27px;background:#fff;color:#333;">4-3</div><div class="c" style="left:397px;top:500px;width:79px;height:25px;line-height:27px;background:#fff;color:#222;">都灵</div><div class="c" style="left:477px;top:500px;width:51px;height:25px;line-height:27px;background:#fdf9f6;color:#333;">0.90</div><div class="c" style="left:529px;top:500px;width:89px;height:25px;line-height:27px;background:#fdf9f6;color:#333;">平/半</div><div class="c" style="left:619px;top:500px;width:54px;height:25px;line-height:27px;background:#fdf9f6;color:#333;">0.99</div><div class="c" style="left:674px;top:500px;width:69px;height:25px;line-height:27px;background:#eef6fb;color:#333;">2.30</div><div class="c" style="left:744px;top:500px;width:70px;height:25px;line-height:27px;background:#eef6fb;color:#333;">2.94</div><div class="c" style="left:815px;top:500px;width:71px;height:25px;line-height:27px;background:#eef6fb;color:#333;">3.56</div><div class="c" style="left:887px;top:500px;width:40px;height:25px;line-height:27px;background:#fff;color:#157515;">平</div><div class="c" style="left:928px;top:500px;width:40px;height:25px;line-height:27px;background:#fff;color:#2020c8;">输</div><div class="c" style="left:969px;top:500px;width:61px;height:25px;line-height:27px;background:#fff;color:#ee1a0a;">大</div><div class="a" style="left:3px;top:525px;width:82px;height:27px;background:#0088ff;"></div><div class="a" style="left:3px;top:525px;width:82px;height:1px;background:#7ccaff;"></div><div class="a" style="left:3px;top:551px;width:82px;height:1px;background:#7ccaff;"></div><div class="c" style="left:3px;top:526px;width:82px;height:25px;line-height:27px;color:#fff">意甲</div><div class="c" style="left:85px;top:526px;width:80px;height:25px;line-height:27px;background:#efefef;color:#333;">24-12-24</div><div class="c" style="left:166px;top:526px;width:92px;height:25px;line-height:27px;background:#efefef;color:#222;">佛罗伦萨</div><div class="c" style="left:259px;top:526px;width:95px;height:25px;line-height:27px;background:#efefef;color:#333;"><span style="color:#cc1f2e">1-2</span>(1-0)</div><div class="c" style="left:355px;top:526px;width:41px;height:25px;line-height:27px;background:#efefef;color:#333;">10-2</div><div class="c" style="left:397px;top:526px;width:79px;height:25px;line-height:27px;background:#efefef;color:#157515;">乌迪内斯</div><div class="c" style="left:477px;top:526px;width:51px;height:25px;line-height:27px;background:#fdf9f6;color:#333;">1.01</div><div class="c" style="left:529px;top:526px;width:89px;height:25px;line-height:27px;background:#fdf9f6;color:#333;">一球</div><div class="c" style="left:619px;top:526px;width:54px;height:25px;line-height:27px;background:#fdf9f6;color:#333;">0.88</div><div class="c" style="left:674px;top:526px;width:69px;height:25px;line-height:27px;background:#eef6fb;color:#333;">1.60</div><div class="c" style="left:744px;top:526px;width:70px;height:25px;line-height:27px;background:#eef6fb;color:#333;">4.00</div><div class="c" style="left:815px;top:526px;width:71px;height:25px;line-height:27px;background:#eef6fb;color:#333;">5.63</div><div class="c" style="left:887px;top:526px;width:40px;height:25px;line-height:27px;background:#efefef;color:#ee1a0a;">胜</div><div class="c" style="left:928px;top:526px;width:40px;height:25px;line-height:27px;background:#efefef;color:#ee1a0a;">赢</div><div class="c" style="left:969px;top:526px;width:61px;height:25px;line-height:27px;background:#efefef;color:#ee1a0a;">大</div><div class="a" style="left:3px;top:551px;width:82px;height:27px;background:#4433ff;"></div><div class="a" style="left:3px;top:551px;width:82px;height:1px;background:#7ccaff;"></div><div class="a" style="left:3px;top:577px;width:82px;height:1px;background:#7ccaff;"></div><div class="c" style="left:3px;top:552px;width:82px;height:25px;line-height:27px;color:#fff">意杯</div><div class="c" style="left:85px;top:552px;width:80px;height:25px;line-height:27px;background:#fff;color:#333;">24-12-20</div><div class="c" style="left:166px;top:552px;width:92px;height:25px;line-height:27px;background:#fff;color:#222;">国际米兰</div><div class="c" style="left:259px;top:552px;width:95px;height:25px;line-height:27px;background:#fff;color:#333;"><span style="color:#cc1f2e">2-0</span>(2-0)</div><div class="c" style="left:355px;top:552px;width:41px;height:25px;line-height:27px;background:#fff;color:#333;">3-3</div><div class="c" style="left:397px;top:552px;width:79px;height:25px;line-height:27px;background:#fff;color:#157515;">乌迪内斯</div><div class="c" style="left:477px;top:552px;width:51px;height:25px;line-height:27px;background:#fdf9f6;color:#333;">0.92</div><div class="c" style="left:529px;top:552px;width:89px;height:25px;line-height:27px;background:#fdf9f6;color:#333;">一/球半</div><div class="c" style="left:619px;top:552px;width:54px;height:25px;line-height:27px;background:#fdf9f6;color:#333;">0.97</div><div class="c" style="left:674px;top:552px;width:69px;height:25px;line-height:27px;background:#eef6fb;color:#333;">1.32</div><div class="c" style="left:744px;top:552px;width:70px;height:25px;line-height:27px;background:#eef6fb;color:#333;">5.30</div><div class="c" style="left:815px;top:552px;width:71px;height:25px;line-height:27px;background:#eef6fb;color:#333;">8.84</div><div class="c" style="left:887px;top:552px;width:40px;height:25px;line-height:27px;background:#fff;color:#2020c8;">负</div><div class="c" style="left:928px;top:552px;width:40px;height:25px;line-height:27px;background:#fff;color:#2020c8;">输</div><div class="c" style="left:969px;top:552px;width:61px;height:25px;line-height:27px;background:#fff;color:#2020c8;">小</div><div class="a" style="left:3px;top:577px;width:82px;height:27px;background:#0088ff;"></div><div class="a" style="left:3px;top:577px;width:82px;height:1px;background:#7ccaff;"></div><div class="a" style="left:3px;top:603px;width:82px;height:1px;background:#7ccaff;"></div><div class="c" style="left:3px;top:578px;width:82px;height:25px;line-height:27px;color:#fff">意甲</div><div class="c" style="left:85px;top:578px;width:80px;height:25px;line-height:27px;background:#efefef;color:#333;">24-12-15</div><div class="c" style="left:166px;top:578px;width:92px;height:25px;line-height:27px;background:#efefef;color:#157515;">乌迪内斯</div><div class="c" style="left:259px;top:578px;width:95px;height:25px;line-height:27px;background:#efefef;color:#333;"><span style="color:#cc1f2e">1-3</span>(1-0)</div><div class="c" style="left:355px;top:578px;width:41px;height:25px;line-height:27px;background:#efefef;color:#333;">3-9</div><div class="c" style="left:397px;top:578px;width:79px;height:25px;line-height:27px;background:#efefef;color:#222;">那不勒斯</div><div class="c" style="left:477px;top:578px;width:51px;height:25px;line-height:27px;background:#fdf9f6;color:#333;">0.91</div><div class="c" style="left:529px;top:578px;width:89px;height:25px;line-height:27px;background:#fdf9f6;color:#333;">受半/一</div><div class="c" style="left:619px;top:578px;width:54px;height:25px;line-height:27px;background:#fdf9f6;color:#333;">0.98</div><div class="c" style="left:674px;top:578px;width:69px;height:25px;line-height:27px;background:#eef6fb;color:#333;">5.36</div><div class="c" style="left:744px;top:578px;width:70px;height:25px;line-height:27px;background:#eef6fb;color:#333;">3.55</div><div class="c" style="left:815px;top:578px;width:71px;height:25px;line-height:27px;background:#eef6fb;color:#333;">1.71</div><div class="c" style="left:887px;top:578px;width:40px;height:25px;line-height:27px;background:#efefef;color:#2020c8;">负</div><div class="c" style="left:928px;top:578px;width:40px;height:25px;line-height:27px;background:#efefef;color:#2020c8;">输</div><div class="c" style="left:969px;top:578px;width:61px;height:25px;line-height:27px;background:#efefef;color:#ee1a0a;">大</div><div class="a" style="left:3px;top:603px;width:82px;height:27px;background:#0088ff;"></div><div class="a" style="left:3px;top:603px;width:82px;height:1px;background:#7ccaff;"></div><div class="a" style="left:3px;top:629px;width:82px;height:1px;background:#7ccaff;"></div><div class="c" style="left:3px;top:604px;width:82px;height:25px;line-height:27px;color:#fff">意甲</div><div class="c" style="left:85px;top:604px;width:80px;height:25px;line-height:27px;background:#fff;color:#333;">24-12-10</div><div class="c" style="left:166px;top:604px;width:92px;height:25px;line-height:27px;background:#fff;color:#222;">蒙扎</div><div class="c" style="left:259px;top:604px;width:95px;height:25px;line-height:27px;background:#fff;color:#333;"><span style="color:#cc1f2e">1-2</span>(0-1)</div><div class="c" style="left:355px;top:604px;width:41px;height:25px;line-height:27px;background:#fff;color:#333;">10-1</div><div class="c" style="left:397px;top:604px;width:79px;height:25px;line-height:27px;background:#fff;color:#157515;">乌迪内斯</div><div class="c" style="left:477px;top:604px;width:51px;height:25px;line-height:27px;background:#fdf9f6;color:#333;">0.90</div><div class="c" style="left:529px;top:604px;width:89px;height:25px;line-height:27px;background:#fdf9f6;color:#333;">平手</div><div class="c" style="left:619px;top:604px;width:54px;height:25px;line-height:27px;background:#fdf9f6;color:#333;">0.99</div><div class="c" style="left:674px;top:604px;width:69px;height:25px;line-height:27px;background:#eef6fb;color:#333;">2.71</div><div class="c" style="left:744px;top:604px;width:70px;height:25px;line-height:27px;background:#eef6fb;color:#333;">2.91</div><div class="c" style="left:815px;top:604px;width:71px;height:25px;line-height:27px;background:#eef6fb;color:#333;">2.94</div><div class="c" style="left:887px;top:604px;width:40px;height:25px;line-height:27px;background:#fff;color:#ee1a0a;">胜</div><div class="c" style="left:928px;top:604px;width:40px;height:25px;line-height:27px;background:#fff;color:#ee1a0a;">赢</div><div class="c" style="left:969px;top:604px;width:61px;height:25px;line-height:27px;background:#fff;color:#ee1a0a;">大</div><div class="a" style="left:3px;top:629px;width:82px;height:27px;background:#0088ff;"></div><div class="a" style="left:3px;top:629px;width:82px;height:1px;background:#7ccaff;"></div><div class="a" style="left:3px;top:655px;width:82px;height:1px;background:#7ccaff;"></div><div class="c" style="left:3px;top:630px;width:82px;height:25px;line-height:27px;color:#fff">意甲</div><div class="c" style="left:85px;top:630px;width:80px;height:25px;line-height:27px;background:#efefef;color:#333;">24-12-01</div><div class="c" style="left:166px;top:630px;width:92px;height:25px;line-height:27px;background:#efefef;color:#157515;"><span class="rc">1</span>乌迪内斯</div><div class="c" style="left:259px;top:630px;width:95px;height:25px;line-height:27px;background:#efefef;color:#333;"><span style="color:#cc1f2e">0-2</span>(0-1)</div><div class="c" style="left:355px;top:630px;width:41px;height:25px;line-height:27px;background:#efefef;color:#333;">6-4</div><div class="c" style="left:397px;top:630px;width:79px;height:25px;line-height:27px;background:#efefef;color:#222;">热那亚</div><div class="c" style="left:477px;top:630px;width:51px;height:25px;line-height:27px;background:#fdf9f6;color:#333;">1.00</div><div class="c" style="left:529px;top:630px;width:89px;height:25px;line-height:27px;background:#fdf9f6;color:#333;">半球</div><div class="c" style="left:619px;top:630px;width:54px;height:25px;line-height:27px;background:#fdf9f6;color:#333;">0.89</div><div class="c" style="left:674px;top:630px;width:69px;height:25px;line-height:27px;background:#eef6fb;color:#333;">1.96</div><div class="c" style="left:744px;top:630px;width:70px;height:25px;line-height:27px;background:#eef6fb;color:#333;">3.28</div><div class="c" style="left:815px;top:630px;width:71px;height:25px;line-height:27px;background:#eef6fb;color:#333;">4.14</div><div class="c" style="left:887px;top:630px;width:40px;height:25px;line-height:27px;background:#efefef;color:#2020c8;">负</div><div class="c" style="left:928px;top:630px;width:40px;height:25px;line-height:27px;background:#efefef;color:#2020c8;">输</div><div class="c" style="left:969px;top:630px;width:61px;height:25px;line-height:27px;background:#efefef;color:#2020c8;">小</div><div class="a" style="left:3px;top:655px;width:82px;height:27px;background:#0088ff;"></div><div class="a" style="left:3px;top:655px;width:82px;height:1px;background:#7ccaff;"></div><div class="a" style="left:3px;top:681px;width:82px;height:1px;background:#7ccaff;"></div><div class="c" style="left:3px;top:656px;width:82px;height:25px;line-height:27px;color:#fff">意甲</div><div class="c" style="left:85px;top:656px;width:80px;height:25px;line-height:27px;background:#fff;color:#333;">24-11-26</div><div class="c" style="left:166px;top:656px;width:92px;height:25px;line-height:27px;background:#fff;color:#222;">恩波利</div><div class="c" style="left:259px;top:656px;width:95px;height:25px;line-height:27px;background:#fff;color:#333;"><span style="color:#cc1f2e">1-1</span>(1-0)</div><div class="c" style="left:355px;top:656px;width:41px;height:25px;line-height:27px;background:#fff;color:#333;">1-8</div><div class="c" style="left:397px;top:656px;width:79px;height:25px;line-height:27px;background:#fff;color:#157515;">乌迪内斯</div><div class="c" style="left:477px;top:656px;width:51px;height:25px;line-height:27px;background:#fdf9f6;color:#333;">1.01</div><div class="c" style="left:529px;top:656px;width:89px;height:25px;line-height:27px;background:#fdf9f6;color:#333;">平手</div><div class="c" style="left:619px;top:656px;width:54px;height:25px;line-height:27px;background:#fdf9f6;color:#333;">0.88</div><div class="c" style="left:674px;top:656px;width:69px;height:25px;line-height:27px;background:#eef6fb;color:#333;">2.98</div><div class="c" style="left:744px;top:656px;width:70px;height:25px;line-height:27px;background:#eef6fb;color:#333;">2.83</div><div class="c" style="left:815px;top:656px;width:71px;height:25px;line-height:27px;background:#eef6fb;color:#333;">2.74</div><div class="c" style="left:887px;top:656px;width:40px;height:25px;line-height:27px;background:#fff;color:#157515;">平</div><div class="c" style="left:928px;top:656px;width:40px;height:25px;line-height:27px;background:#fff;color:#157515;">走</div><div class="c" style="left:969px;top:656px;width:61px;height:25px;line-height:27px;background:#fff;color:#157515;">走</div><div class="a" style="left:3px;top:681px;width:82px;height:27px;background:#0088ff;"></div><div class="a" style="left:3px;top:681px;width:82px;height:1px;background:#7ccaff;"></div><div class="a" style="left:3px;top:707px;width:82px;height:1px;background:#c0c0c0;"></div><div class="c" style="left:3px;top:682px;width:82px;height:25px;line-height:27px;color:#fff">意甲</div><div class="c" style="left:85px;top:682px;width:80px;height:25px;line-height:27px;background:#efefef;color:#333;">24-11-10</div><div class="c" style="left:166px;top:682px;width:92px;height:25px;line-height:27px;background:#efefef;color:#222;">亚特兰大</div><div class="c" style="left:259px;top:682px;width:95px;height:25px;line-height:27px;background:#efefef;color:#333;"><span style="color:#cc1f2e">2-1</span>(0-1)</div><div class="c" style="left:355px;top:682px;width:41px;height:25px;line-height:27px;background:#efefef;color:#333;">4-5</div><div class="c" style="left:397px;top:682px;width:79px;height:25px;line-height:27px;background:#efefef;color:#157515;">乌迪内斯</div><div class="c" style="left:477px;top:682px;width:51px;height:25px;line-height:27px;background:#fdf9f6;color:#333;">0.78</div><div class="c" style="left:529px;top:682px;width:89px;height:25px;line-height:27px;background:#fdf9f6;color:#333;">一球</div><div class="c" style="left:619px;top:682px;width:54px;height:25px;line-height:27px;background:#fdf9f6;color:#333;">1.12</div><div class="c" style="left:674px;top:682px;width:69px;height:25px;line-height:27px;background:#eef6fb;color:#333;">1.44</div><div class="c" style="left:744px;top:682px;width:70px;height:25px;line-height:27px;background:#eef6fb;color:#333;">4.49</div><div class="c" style="left:815px;top:682px;width:71px;height:25px;line-height:27px;background:#eef6fb;color:#333;">7.26</div><div class="c" style="left:887px;top:682px;width:40px;height:25px;line-height:27px;background:#efefef;color:#2020c8;">负</div><div class="c" style="left:928px;top:682px;width:40px;height:25px;line-height:27px;background:#efefef;color:#157515;">走</div><div class="c" style="left:969px;top:682px;width:61px;height:25px;line-height:27px;background:#efefef;color:#ee1a0a;">大</div><div class="c" style="left:4px;top:708px;width:1026px;height:25px;line-height:27px;background:#fff;color:#333;;letter-spacing:0.25px">近<span class="r">10</span>场,胜2平4负4, 胜率:<span class="r">20%</span> 让胜率:<span class="r">30%</span> 大率:<span class="r">50%</span> 单率:<span class="r">30%</span></div><select class="sel" style="left:515px;top:409px;width:60px;height:18px;"><option>Crow*</option></select><select class="sel" style="left:583px;top:409px;width:50px;height:18px;"><option>终指</option></select><select class="sel" style="left:715px;top:409px;width:69px;height:18px;"><option>平均值</option></select><select class="sel" style="left:793px;top:409px;width:50px;height:18px;"><option>终指</option></select><select class="sel" style="left:933px;top:409px;width:50px;height:18px;"><option>全场</option></select></body></html>
